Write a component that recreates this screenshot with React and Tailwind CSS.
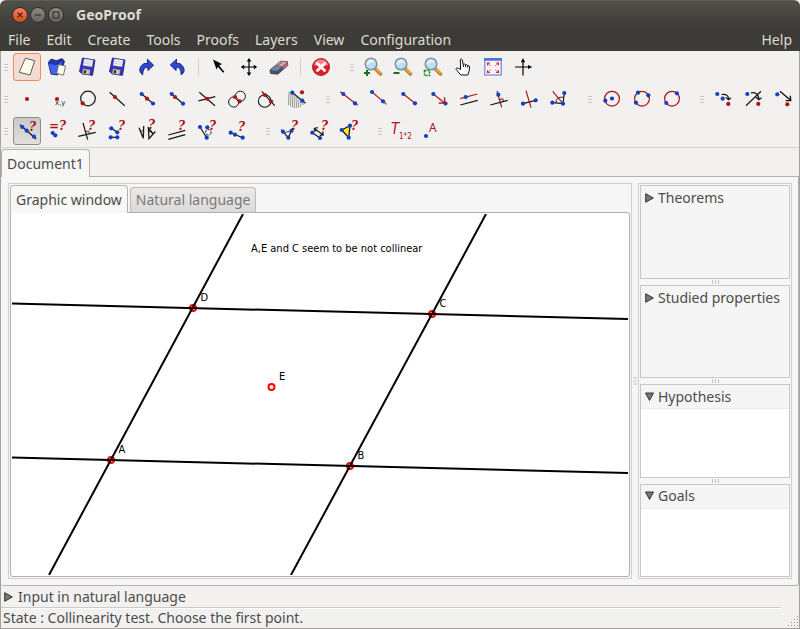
import React from "react";

const RED = "#b01414";
const BLUE = "#1440c0";

function Dot({ x, y, c = BLUE }) {
  return <circle cx={x} cy={y} r="2.1" fill={c} />;
}

function Ln({ d, c = "#161616", w = 1.2 }) {
  return <path d={d} stroke={c} strokeWidth={w} fill="none" />;
}

function Q({ x = 14, y = 11, t = "?" }) {
  return (
    <text x={x - 1} y={y} fontSize="12" fontWeight="bold" fontStyle="italic" fontFamily="DejaVu Serif, serif" fill={RED}>
      {t}
    </text>
  );
}

function Floppy() {
  return (
    <>
      <path d="M7.5 3 L20 5 L17.5 20.3 L7.5 19 L4.5 16.5 Z" fill="#3434c4" stroke="#15157a" strokeWidth="0.8" />
      <path d="M9.3 3.8 L18.2 5.2 L17 11.8 L8 10.4 Z" fill="#f4f4f4" stroke="#9a9ab8" strokeWidth="0.4" />
      <path d="M10 6.3 L16.6 7.4 M9.6 8.3 L16.2 9.4" stroke="#b9b9b9" strokeWidth="0.7" />
      <path d="M8 13.6 L15.5 14.8 L14.6 19.8 L8 18.9 L7 17.8 Z" fill="#c9c9c9" stroke="#444" strokeWidth="0.5" />
      <path d="M9 15 L11.4 15.4 L10.9 18.4 L8.5 18 Z" fill="#33333c" />
    </>
  );
}

function Magnifier({ children }) {
  return (
    <>
      <path d="M14 13.5 L20.5 20" stroke="#b5741c" strokeWidth="3.4" />
      <path d="M14.6 13.6 L20 19" stroke="#eab04e" strokeWidth="1.7" />
      <circle cx="10" cy="9" r="5.8" fill="#b4e2fb" stroke="#8c8f94" strokeWidth="1.5" />
      <path d="M5.8 9.2 Q6.3 5 10.6 4.9 Q13 5.3 13.8 7 Q9 7 5.8 9.2 Z" fill="#e6f7ff" />
      {children}
    </>
  );
}

const icons = {
  newDoc: <path d="M10.3 3.3 L19.7 5.7 L15 20 L4.3 17.3 Z" fill="#fffff0" stroke="#4a4a4a" strokeWidth="0.9" strokeLinejoin="round" />,
  open: (
    <>
      <path d="M3.5 7.2 L6 4.2 L9.5 5 L11 5.8 L17 3.6 L19.5 6 L18 11 L12 20 L6 18.8 Z" fill="#2438ae" stroke="#101a66" strokeWidth="0.8" />
      <path d="M3.3 8 L11 9.8 L18 6 L13 19.8 L6.2 19.2 Z" fill="#4364ec" stroke="#16238a" strokeWidth="0.6" />
      <path d="M13.5 9.5 L20.5 11 L18.5 20 L11.6 18.4 Z" fill="#fffff0" stroke="#555" strokeWidth="0.8" />
    </>
  ),
  save: <Floppy />,
  redo: <path d="M7.6 19.8 Q3 16.5 5.8 11.5 Q8.3 7.8 12.6 8.1 L12.4 4.2 L18.6 10.2 L12.9 15.5 L12.8 12 Q8 12 7.6 19.8 Z" fill="#3047d4" stroke="#101c72" strokeWidth="0.9" strokeLinejoin="round" />,
  undo: <path d="M16.2 19.9 Q21 16.5 18 11.5 Q15.5 7.8 11.4 8.1 L11.5 4.2 L5.3 10 L11.1 15.5 L11.2 12 Q16.2 12 16.2 19.9 Z" fill="#3047d4" stroke="#101c72" strokeWidth="0.9" strokeLinejoin="round" />,
  pointer: <path d="M6 4.5 L15 9 L12.1 10.6 L17.3 16.8 L16.1 17.8 L10.9 11.7 L9.5 14.6 Z" fill="#000" />,
  move: (
    <>
      <Ln d="M12 5 V19 M5 12 H19" c="#000" />
      <path d="M12 3 L9.7 6.4 H14.3 Z M12 21 L9.7 17.6 H14.3 Z M3.8 12 L7.2 9.7 V14.3 Z M20.2 12 L16.8 9.7 V14.3 Z" />
    </>
  ),
  eraser: (
    <>
      <path d="M3 15 L13.5 6.3 L20.3 6.5 L20.8 10.5 L10.8 19.2 L3.6 18.5 Z" fill="#4a5266" stroke="#33353f" strokeWidth="0.8" strokeLinejoin="round" />
      <path d="M9 10.2 L13.7 6.4 L20.2 6.8 L15.5 11.3 Z" fill="#e9a6b2" />
      <path d="M15.6 11.6 L20.6 7.4 L20.6 10.4 L15.7 14.6 Z" fill="#bb6d80" />
      <path d="M3.6 14.9 L8.5 10.7 L15 11.6 L10.4 15.8 Z" fill="#7288a8" />
      <path d="M10.6 10.7 L15.8 6.8" stroke="#7a3b4c" strokeWidth="0.8" />
    </>
  ),
  stop: (
    <>
      <circle cx="12" cy="12" r="8.5" fill="#e01e2a" stroke="#9c1018" strokeWidth="0.8" />
      <path d="M4.8 10 A7.5 7.5 0 0 1 19.2 10 Q12 12.5 4.8 10 Z" fill="#f58088" />
      <path d="M8.4 8.4 L15.6 15.6 M15.6 8.4 L8.4 15.6" stroke="#fff" strokeWidth="2.8" strokeLinecap="round" />
    </>
  ),
  zoomIn: <Magnifier><path d="M6 15 V21 M3 18 H9" stroke="#0a7a1c" strokeWidth="2" /></Magnifier>,
  zoomOut: <Magnifier><path d="M2.5 18 H8.5" stroke="#0a7a1c" strokeWidth="2" /></Magnifier>,
  zoomFit: <Magnifier><rect x="3.5" y="15.5" width="5" height="5" fill="#f2f1f0" stroke="#0a8a1c" strokeWidth="1.5" strokeDasharray="2 1" /></Magnifier>,
  hand: <path d="M9.3 4.5 Q10.5 3.2 11.3 4.8 L12.1 9.3 Q13.4 8.4 14.3 9.7 Q15.6 9 16.5 10.4 Q18.2 10.2 18.5 12 L18.3 15.5 L16.8 20 H9.8 L5 14.4 Q5 12.7 6.7 13 L9.6 14.5 Z M12.1 9.4 L12.5 12 M14.4 9.9 L14.6 12.2 M16.6 10.7 L16.6 12.6" fill="#fff" stroke="#111" strokeWidth="1" strokeLinejoin="round" />,
  fullscreen: (
    <>
      <rect x="3.8" y="4" width="16.4" height="16" fill="#fbf6fb" stroke="#8fa0ea" strokeWidth="1.6" />
      <rect x="3" y="3" width="18" height="2.8" fill="#5076dc" />
      <path d="M6 7.5 H9.4 L6 10.8 Z M18 7.5 V10.8 L14.6 7.5 Z M6 18 V14.7 L9.4 18 Z M18 18 H14.6 L18 14.7 Z" fill="#e81212" />
      <path d="M7 8.5 L10 11 M17 8.5 L14 11 M7 17 L10 14.5 M17 17 L14 14.5" stroke="#f06060" strokeWidth="0.9" />
    </>
  ),
  axes: (
    <>
      <Ln d="M12 5 V20.5 M4 12 H19" c="#000" />
      <path d="M12 3 L9.9 7.2 H14.1 Z M21.2 12 L17 9.9 V14.1 Z" />
    </>
  ),

  point: <Dot x={12} y={12} c={RED} />,
  pointXY: (
    <>
      <Dot x={12} y={12} c={RED} />
      <text x="10" y="18" fontSize="7" fontFamily="DejaVu Sans, sans-serif" fill="#222">x,y</text>
    </>
  ),
  circlePt: (<><circle cx="13" cy="11.5" r="7.3" fill="none" stroke="#161616" strokeWidth="1.2" /><Dot x={7.7} y={16.3} c={RED} /></>),
  linePt: (<><Ln d="M4.7 5.3 L19.7 18.7" /><Dot x={10} y={10} c={RED} /></>),
  middle: (<><Ln d="M6.7 7 L18 16.5" /><Dot x={6.7} y={7} /><Dot x={18} y={16.5} /><Dot x={12} y={11.7} c={RED} /></>),
  segPt: (<><Ln d="M6.7 7 L18 16.7" /><Dot x={6.7} y={7} /><Dot x={18} y={16.7} /><Dot x={10} y={10} c={RED} /></>),
  inter: (<><Ln d="M3.5 13.9 L20.3 9.7 M4.3 5.3 L20 18.7" /><Dot x={12.3} y={11.8} c={RED} /></>),
  interCC: (
    <>
      <circle cx="8.7" cy="15" r="5.1" fill="none" stroke="#161616" />
      <circle cx="15.3" cy="9.3" r="5.1" fill="none" stroke="#161616" />
      <Dot x={10} y={10} c={RED} /><Dot x={14.7} y={14.3} c={RED} />
    </>
  ),
  interLC: (<><circle cx="9.7" cy="14" r="6.3" fill="none" stroke="#161616" strokeWidth="1.1" /><Ln d="M6.7 4.3 L19.7 18.7" /><Dot x={10} y={8} c={RED} /><Dot x={16} y={14.3} c={RED} /></>),
  halfPlane: (
    <>
      <Ln d="M4 5 L3.5 18 M6 5 L5.5 19.5 M8 7 L7.3 20.5 M10 8.5 L9.3 21 M12 10 L11.3 21 M14 12 L13.4 20.5 M16 13.5 L15.5 20 M18 15 L17.8 18" c="#8c8c8c" w={0.9} />
      <Ln d="M6 4.5 L20.5 16.2" />
      <Dot x={7.3} y={5.7} /><Dot x={17.3} y={13.7} /><Dot x={17} y={5.3} c={RED} />
    </>
  ),
  line: (<><Ln d="M3.3 4.7 L20.7 18.3" c={RED} /><Dot x={6.3} y={7} /><Dot x={18} y={16.3} /></>),
  ray: (<><Ln d="M5 5 L19.6 17.4" c={RED} /><Dot x={5} y={5} /><Dot x={16} y={14.3} /></>),
  segment: (<><Ln d="M6.3 7 L18 16.3" c={RED} /><Dot x={6.3} y={7} /><Dot x={18} y={16.3} /></>),
  vector: (<><Ln d="M6.3 7 L18 16.3" c={RED} /><Dot x={6.3} y={7} /><Dot x={18.5} y={16.5} /><Ln d="M11.8 16 H17.8 L17.5 10.2" c={RED} w={1.4} /></>),
  parallel: (<><Ln d="M3.3 11.7 L20.3 7" c={RED} /><Ln d="M3.3 18 L20.7 13.3" /><Dot x={8.7} y={10} /></>),
  perp: (<><Ln d="M10 4 L14.7 20.3" c={RED} /><Ln d="M3.3 18 L20.7 13.3" /><Ln d="M12.5 12.6 L15.7 11.7 L16.5 14.4" w={0.9} /><Dot x={11.3} y={7.7} /></>),
  bisector: (<><Ln d="M6 16.7 L18.7 13.3" /><Ln d="M9 3.7 L14 20.7" c={RED} /><Dot x={6} y={16.7} /><Dot x={18.7} y={13.3} /></>),
  angleBis: (<><Ln d="M5.3 15.7 L16 16.7 L17.3 6" /><Ln d="M9 16 Q8.6 9.5 16.6 10.2" w={0.9} /><Ln d="M5.7 4.3 L16.3 16.8" c={RED} /><Dot x={5.3} y={15.7} /><Dot x={16} y={16.7} /><Dot x={17.3} y={6} /></>),
  circleC: (<><circle cx="13" cy="11.7" r="7.4" fill="none" stroke={RED} strokeWidth="1.2" /><Dot x={13} y={11.5} /><Dot x={6.3} y={13.7} /></>),
  circle3: (<><circle cx="13" cy="11.7" r="7.4" fill="none" stroke={RED} strokeWidth="1.2" /><Dot x={9} y={5.7} /><Dot x={19.3} y={8.3} /><Dot x={7} y={15.7} /></>),
  circleD: (<><circle cx="13" cy="11.7" r="7.4" fill="none" stroke={RED} strokeWidth="1.2" /><Dot x={17.9} y={6.3} /><Dot x={7.3} y={16} /></>),
  symCentral: (<><Ln d="M10.5 7.5 Q17.5 6.5 17.7 12.3 M14.7 10.5 L17.7 12.8 L20 10.8" /><Dot x={6.3} y={7} /><Dot x={11.7} y={11.7} /><Dot x={17.3} y={16.9} c={RED} /></>),
  symAxial: (<><Ln d="M5 18.7 L20 4.3 M10 5.8 Q17 4.5 18 12.3 M14.8 10.3 L18 12.8 L20.5 10.8" /><Dot x={6.3} y={7} /><Dot x={17.3} y={16.9} c={RED} /></>),
  translate: (<><Ln d="M9 4.3 L19.5 13.3 M14.7 13.6 H19.7 L19.3 8.7" w={1.4} /><Dot x={6.3} y={7.3} /><Dot x={16.3} y={17.3} c={RED} /></>),

  collinear: (<><Ln d="M5 5.7 L21.3 20" /><Dot x={7.3} y={8} /><Dot x={11.7} y={11.7} /><Dot x={19} y={17.7} /><Q x={15} y={12} /></>),
  equalQ: (<><Q x={5} y={11} t="=?" /><Dot x={7.7} y={14} /><Dot x={10.3} y={16.3} /></>),
  perpQ: (<><Ln d="M3.3 17.3 L20.7 13.3 M8 4 L12.7 20.7" /><Ln d="M11 12.5 L13.7 12 L14.3 14.5" w={0.8} /><Q x={14} y={11} /></>),
  congQ: (<><Ln d="M6.3 9.3 L12.3 13.3 M5.7 18.3 H12.3" /><Dot x={6.3} y={9.3} /><Dot x={12.3} y={13.3} /><Dot x={5.7} y={18.3} /><Dot x={12.3} y={18.3} /><Q x={14} y={11} /></>),
  angleEqQ: (<><Ln d="M4 8.7 L8.3 19.3 L8.7 7 M13.3 8 L14 19.7 L20.3 12.5 M13.5 9 L18 15" w={1.3} /><Ln d="M5 11.5 Q7 13 8.7 11 M14 12.5 Q17 12 18 14.7" w={0.8} /><Q x={14} y={10} /></>),
  parallelQ: (<><Ln d="M3.3 16 L20.3 11.3 M3.3 20.3 L20.3 15.7" /><Q x={14} y={11} /></>),
  cocyclicQ: (<><Ln d="M5 8 L11.7 18.7" /><circle cx="13.3" cy="13.3" r="2.8" fill="none" stroke="#161616" strokeWidth="0.9" strokeDasharray="3 1" /><Dot x={5} y={8} /><Dot x={12.3} y={8.3} /><Dot x={11.7} y={18.7} /><Q x={15} y={11} /></>),
  betweenQ: (<><Ln d="M5.7 13.7 L17.7 18.7" /><Dot x={5.7} y={13.7} /><Dot x={10} y={15.7} /><Dot x={17.7} y={18.7} /><Q x={14} y={12} /></>),
  measureAngle: (<><Ln d="M4 10.7 L11.3 18.7 L15.7 9" /><Ln d="M8 14 Q10.5 11.5 14 13" w={0.8} /><Dot x={6} y={12.7} /><Dot x={11.3} y={18.7} /><Dot x={14.5} y={11.8} /><Q x={15} y={11} /></>),
  measureLen: (<><Ln d="M5.3 13.7 L13 19" /><Ln d="M7.5 9.7 L16 15.7 M10.8 8.6 L7.3 9.5 L8 12.7 M12.7 16.3 L16.2 15.9 L15.8 12.4" /><Dot x={5.3} y={13.7} /><Dot x={13} y={19} /><Q x={15} y={11} /></>),
  measureArea: (<><path d="M4.7 11 L13 6.7 L11.7 18.7 Z" fill="#ffee22" stroke="#161616" strokeWidth="1.3" /><Dot x={4.7} y={11} /><Dot x={13} y={6.7} /><Dot x={11.7} y={18.7} /><Q x={15} y={11} /></>),
  textCalc: (
    <g fontFamily="DejaVu Sans Condensed, DejaVu Sans, sans-serif" fill={RED}>
      <text x="2" y="15" fontSize="15" fontStyle="italic">T</text>
      <text x="10" y="20" fontSize="8">1*2</text>
    </g>
  ),
  label: (<><Dot x={7} y={17} /><text x="10" y="13" fontSize="12" fontFamily="Noto Sans, sans-serif" fill={RED}>A</text></>),
};

const toolbars = [
  [
    ["newDoc", "open", "save", "save", "redo", "undo", "|", "pointer", "move", "eraser", "|", "stop"],
    ["zoomIn", "zoomOut", "zoomFit", "hand", "fullscreen", "axes"],
  ],
  [
    ["point", "pointXY", "circlePt", "linePt", "middle", "segPt", "inter", "interCC", "interLC", "halfPlane"],
    ["line", "ray", "segment", "vector", "parallel", "perp", "bisector", "angleBis"],
    ["circleC", "circle3", "circleD"],
    ["symCentral", "symAxial", "translate"],
  ],
  [
    ["collinear", "equalQ", "perpQ", "congQ", "angleEqQ", "parallelQ", "cocyclicQ", "betweenQ"],
    ["measureAngle", "measureLen", "measureArea"],
    ["textCalc", "label"],
  ],
];

const buttonStyles = {
  newDoc: "border-[#f08a62] bg-[#f2dbd0]",
  collinear: "border-[#8f8d89] bg-linear-to-b from-[#c9c8c6] to-[#e0dfdd]",
};

function ToolButton({ name }) {
  return (
    <button
      aria-label={name}
      className={"mx-px flex size-7 items-center justify-center rounded-[3px] border " + (buttonStyles[name] || "border-transparent")}
    >
      <svg width="24" height="24" viewBox="0 0 24 24" className="shrink-0">{icons[name]}</svg>
    </button>
  );
}

function Handle() {
  return (
    <span className="flex w-3 flex-col items-center gap-[2px]">
      <span className="h-px w-1 bg-[#c9c6c2]" />
      <span className="h-px w-1 bg-[#c9c6c2]" />
      <span className="h-px w-1 bg-[#c9c6c2]" />
    </span>
  );
}

function ToolRow({ groups }) {
  return (
    <div className="flex h-8 gap-[10px]">
      {groups.map((group, i) => (
        <div key={i} role="toolbar" className="flex shrink-0 items-center">
          <Handle />
          {group.map((name, j) =>
            name === "|" ? (
              <span key={j} className="flex w-3 justify-center">
                <span className="h-[18px] w-px bg-[#d3d0cc]" />
              </span>
            ) : (
              <ToolButton key={j} name={name} />
            )
          )}
        </div>
      ))}
    </div>
  );
}

function Triangle({ open }) {
  return (
    <svg width="9" height="10" viewBox="0 0 9 10" className="shrink-0">
      <path d={open ? "M0.5 1 H8.5 L4.5 8.5 Z" : "M0.7 0.7 L8.3 5 L0.7 9.3 Z"} fill="#777" stroke="#333" strokeWidth="1" />
    </svg>
  );
}

function SidePanel({ title, open }) {
  return (
    <section className="flex flex-1 flex-col border border-[#cbc8c4] bg-[#f5f5f5]">
      <button aria-expanded={!!open} className={"flex h-6 items-center gap-1 whitespace-nowrap pl-1 " + (open ? "border-b border-[#ebebeb]" : "")}>
        <Triangle open={open} />
        <span>{title}</span>
      </button>
      {open && <div className="flex-1 bg-white" />}
    </section>
  );
}

function SplitGrip() {
  return (
    <div className="flex h-[6px] shrink-0 items-center justify-center gap-[2px]">
      <span className="h-1 w-px bg-[#c4c1bd]" />
      <span className="h-1 w-px bg-[#c4c1bd]" />
      <span className="h-1 w-px bg-[#c4c1bd]" />
    </div>
  );
}

const points = [
  { name: "A", x: 99, y: 246 },
  { name: "B", x: 338, y: 252 },
  { name: "C", x: 420, y: 100 },
  { name: "D", x: 181, y: 94 },
  { name: "E", x: 259.5, y: 173 },
];

function Drawing() {
  return (
    <svg className="h-full w-full" fontFamily="DejaVu Sans Condensed, DejaVu Sans, sans-serif" fontSize="11">
      {points.map((p) => (
        <circle key={p.name} cx={p.x} cy={p.y} r="3" fill="none" stroke="#f00" strokeWidth="2" />
      ))}
      <g stroke="#000" strokeWidth="2">
        <line x1="37" y1="361" x2="231" y2="0" />
        <line x1="279" y1="361" x2="474" y2="0" />
        <line x1="0" y1="89.5" x2="616" y2="105" />
        <line x1="0" y1="243.5" x2="616" y2="259" />
      </g>
      {points.map((p) => (
        <text key={p.name} x={p.x + 7.5} y={p.y - 7}>{p.name}</text>
      ))}
      <text x="239" y="38">A,E and C seem to be not collinear</text>
    </svg>
  );
}

const menus = ["File", "Edit", "Create", "Tools", "Proofs", "Layers", "View", "Configuration"];

function WindowButton({ label, close, children }) {
  return (
    <button
      aria-label={label}
      className={"flex size-4 items-center justify-center rounded-full border border-[#2e2d2a] " + (close ? "bg-linear-to-b from-[#f58059] to-[#dd4814]" : "bg-linear-to-b from-[#8a8880] to-[#66655e]")}
    >
      <svg width="8" height="8" viewBox="0 0 8 8" fill="none" stroke="#3a2a22" strokeWidth="1.1" className="shrink-0">{children}</svg>
    </button>
  );
}

export default function App() {
  return (
    <div className="flex min-h-screen flex-col bg-[#f2f1f0] font-['Noto_Sans',sans-serif] text-sm leading-5 text-[#4c4c4c]">
      <header className="rounded-t-md border-t border-[#5f5e58] bg-linear-to-b from-[#504f4a] to-[#3c3b37] to-55% text-[#dfdbd2]">
        <div className="flex h-7 items-center pl-3">
          <div className="flex gap-[2px]">
            <WindowButton label="Close" close><path d="M1.5 1.5 L6.5 6.5 M6.5 1.5 L1.5 6.5" /></WindowButton>
            <WindowButton label="Minimize"><path d="M1 4 H7" /></WindowButton>
            <WindowButton label="Maximize"><rect x="1" y="1" width="6" height="6" /></WindowButton>
          </div>
          <h1 className="ml-3 font-bold">GeoProof</h1>
        </div>
        <nav className="flex h-[22px] items-center">
          {menus.map((m) => (
            <button key={m} className="px-2">{m}</button>
          ))}
          <button className="ml-auto px-2">Help</button>
        </nav>
      </header>

      <div className="flex flex-1 flex-col border-x border-b border-[#a5a29d]">
        <div className="-ml-px overflow-hidden border-b border-[#d6d3d0]">
          {toolbars.map((groups, i) => (
            <ToolRow key={i} groups={groups} />
          ))}
        </div>

        <div role="tablist" className="mt-px flex">
          <button role="tab" aria-selected="true" className="z-10 -mb-px h-7 rounded-t-[4px] border border-b-0 border-[#b5b1ac] bg-[#f7f7f6] px-[5px]">
            Document1
          </button>
        </div>

        <main className="flex flex-1 gap-[6px] rounded-b-[3px] border border-l-0 border-[#b5b1ac] bg-[#f6f6f6] p-[6px] pl-[7px]">
          <div className="flex min-w-0 flex-1 flex-col border border-[#d3d0cc] p-px">
            <div role="tablist" className="flex items-end gap-[2px]">
              <button role="tab" aria-selected="true" className="z-10 -mb-px h-7 rounded-t-[4px] border border-b-0 border-[#b5b1ac] bg-[#f7f7f6] px-[5px]">
                Graphic window
              </button>
              <button role="tab" aria-selected="false" className="h-[25px] rounded-t-[4px] border border-b-0 border-[#bebab6] bg-linear-to-b from-[#ebeae9] to-[#dcdad8] px-[5px] text-[#7a7977]">
                Natural language
              </button>
            </div>
            <div className="relative flex-1 rounded-b-[3px] rounded-tr-[3px] border border-[#b5b1ac] bg-white p-px">
              <div className="absolute inset-px overflow-hidden">
                <Drawing />
              </div>
            </div>
          </div>
          <aside className="relative flex w-[154px] shrink-0 flex-col border border-[#d3d0cc] p-px">
            <div className="absolute top-1/2 -left-[6px] flex w-1 -translate-y-1/2 flex-col gap-[2px]">
              <span className="h-px bg-[#c4c1bd]" />
              <span className="h-px bg-[#c4c1bd]" />
              <span className="h-px bg-[#c4c1bd]" />
            </div>
            <SidePanel title="Theorems" />
            <SplitGrip />
            <SidePanel title="Studied properties" />
            <SplitGrip />
            <SidePanel title="Hypothesis" open />
            <SplitGrip />
            <SidePanel title="Goals" open />
          </aside>
        </main>

        <button aria-expanded="false" className="flex h-[21px] items-center gap-[5px] pl-[3px]">
          <Triangle />
          <span>Input in natural language</span>
        </button>
        <footer className="relative flex h-[21px] items-center pl-[2px]">
          <div className="absolute top-0 right-[18px] left-0 h-[2px] border-t border-[#cfccc8] bg-white" />
          <span>State : Collinearity test. Choose the first point.</span>
          <svg width="12" height="12" viewBox="0 0 12 12" className="absolute right-0 bottom-0" fill="#96928d">
            <path d="M10 0h1v1h-1z M7 3h1v1h-1z M10 3h1v1h-1z M4 6h1v1h-1z M7 6h1v1h-1z M10 6h1v1h-1z M1 9h1v1h-1z M4 9h1v1h-1z M7 9h1v1h-1z M10 9h1v1h-1z" />
          </svg>
        </footer>
      </div>
    </div>
  );
}
